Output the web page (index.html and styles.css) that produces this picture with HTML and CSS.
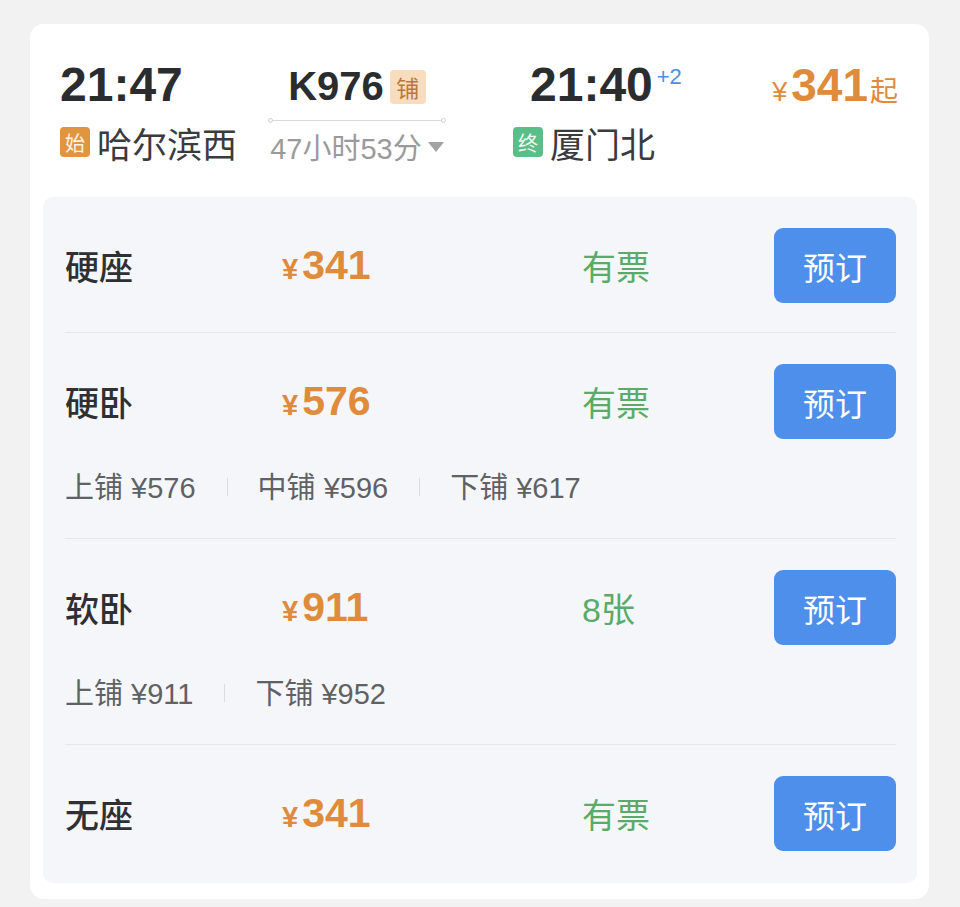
FILE: index.html
```html
<!DOCTYPE html>
<html lang="zh-CN">

<head>
    <meta charset="UTF-8">
    <meta name="viewport" content="width=device-width, initial-scale=1.0">
    <title>K976 车次详情</title>
    <link rel="stylesheet" href="styles.css">
</head>

<body>

    <div class="card">
        <div class="trip">
            <div class="end">
                <div class="time">21:47</div>
                <div class="station"><span class="tag tag-start">始</span>哈尔滨西</div>
            </div>

            <div class="train">
                <div class="train-no">K976<span class="tag tag-berth">铺</span></div>
                <svg class="track" width="178" height="7" viewBox="0 0 178 7">
                    <line x1="4" y1="3.5" x2="174" y2="3.5" stroke="#d9d9d9" stroke-width="1.2" />
                    <circle cx="2.5" cy="3.5" r="2" fill="#fff" stroke="#d0d0d0" stroke-width="1" />
                    <circle cx="175.5" cy="3.5" r="2" fill="#fff" stroke="#d0d0d0" stroke-width="1" />
                </svg>
                <div class="duration">47小时53分
                    <svg class="caret" width="16" height="11" viewBox="0 0 16 11">
                        <polygon points="0,0 16,0 8,10" fill="#a3a3a3" />
                    </svg>
                </div>
            </div>

            <div class="end end-to">
                <div class="time">21:40<span class="plus">+2</span></div>
                <div class="station"><span class="tag tag-end">终</span>厦门北</div>
            </div>

            <div class="lowest">
                <span class="lowest-yen">¥</span><span class="lowest-amount">341</span><span class="lowest-qi">起</span>
            </div>
        </div>

        <div class="seats">
            <div class="seat">
                <div class="seat-main">
                    <div class="seat-name">硬座</div>
                    <div class="seat-price"><span class="yen">¥</span>341</div>
                    <div class="seat-left">有票</div>
                    <button class="book">预订</button>
                </div>
            </div>

            <div class="seat">
                <div class="seat-main">
                    <div class="seat-name">硬卧</div>
                    <div class="seat-price"><span class="yen">¥</span>576</div>
                    <div class="seat-left">有票</div>
                    <button class="book">预订</button>
                </div>
                <div class="berths">
                    <span>上铺 ¥576</span>
                    <i class="sep"></i>
                    <span>中铺 ¥596</span>
                    <i class="sep"></i>
                    <span>下铺 ¥617</span>
                </div>
            </div>

            <div class="seat">
                <div class="seat-main">
                    <div class="seat-name">软卧</div>
                    <div class="seat-price"><span class="yen">¥</span>911</div>
                    <div class="seat-left">8张</div>
                    <button class="book">预订</button>
                </div>
                <div class="berths">
                    <span>上铺 ¥911</span>
                    <i class="sep"></i>
                    <span>下铺 ¥952</span>
                </div>
            </div>

            <div class="seat">
                <div class="seat-main">
                    <div class="seat-name">无座</div>
                    <div class="seat-price"><span class="yen">¥</span>341</div>
                    <div class="seat-left">有票</div>
                    <button class="book">预订</button>
                </div>
            </div>
        </div>
    </div>

</body>

</html>
```

FILE: styles.css
```css
body {
    margin: 0;
    padding: 24px 31px 9px 30px;
    background-color: #f2f2f3;
    font-family: "Liberation Sans", "Noto Sans CJK SC", sans-serif;
    color: #2f3033;
}

.card {
    background-color: #fff;
    border-radius: 14px;
    padding: 0 12px 16px 13px;
}

/* header: times, stations, train */

.trip {
    display: flex;
    align-items: flex-start;
    padding: 37px 19px 33px 17px;
}

.end {
    width: 208px;
}

.end-to {
    width: auto;
    margin-left: 67px;
}

.time {
    font-size: 48px;
    line-height: 48px;
    font-weight: bold;
    color: #2b2c2f;
    white-space: nowrap;
}

.end-to .time {
    padding-left: 17px;
}

.plus {
    display: inline-block;
    vertical-align: top;
    margin-top: 3px;
    font-size: 22px;
    line-height: 26px;
    font-weight: normal;
    color: #4a8fe0;
    margin-left: 4px;
}

.station {
    display: flex;
    align-items: center;
    margin-top: 15px;
    height: 36px;
    font-size: 35px;
    color: #3a3b3e;
    white-space: nowrap;
}

.tag {
    display: inline-flex;
    align-items: center;
    justify-content: center;
    border-radius: 4px;
    font-family: "Noto Sans CJK SC", sans-serif;
}

.tag-start,
.tag-end {
    width: 30px;
    height: 30px;
    font-size: 20px;
    color: #fff3e6;
    margin-right: 7px;
}

.tag-start {
    background-color: #e2953f;
}

.tag-end {
    background-color: #5bbd87;
    color: #eefaf2;
}

.train {
    width: 178px;
    display: flex;
    flex-direction: column;
    align-items: center;
}

.train-no {
    display: flex;
    align-items: center;
    height: 48px;
    padding-top: 3px;
    box-sizing: border-box;
    font-size: 40px;
    font-weight: bold;
    color: #2b2c2f;
}

.tag-berth {
    width: 36px;
    height: 34px;
    margin-left: 6px;
    font-size: 23px;
    font-weight: normal;
    background-color: #f7dcbd;
    color: #b9783a;
}

.track {
    display: block;
    margin-top: 8px;
}

.duration {
    display: flex;
    align-items: center;
    gap: 6px;
    margin-top: 4px;
    height: 36px;
    font-size: 29px;
    color: #9a9a9c;
    white-space: nowrap;
}

.caret {
    margin-top: 2px;
}

.lowest {
    margin-left: auto;
    display: flex;
    align-items: baseline;
    line-height: 48px;
    color: #e08a3b;
}

.lowest-yen {
    font-size: 27px;
    margin-right: 4px;
}

.lowest-amount {
    font-size: 46px;
    font-weight: bold;
}

.lowest-qi {
    font-size: 28px;
    margin-left: 2px;
}

/* seat list */

.seats {
    background-color: #f5f6fa;
    border-radius: 10px;
}

.seat {
    margin: 0 21px 0 22px;
    padding: 31px 0 29px;
    border-bottom: 1px solid #e5e6ea;
}

.seat:last-child {
    border-bottom: none;
    padding-bottom: 32px;
}

.seat-main {
    display: grid;
    grid-template-columns: 217px 300px 1fr 122px;
    align-items: center;
}

.seat-name {
    font-size: 34px;
    font-weight: 500;
    color: #2f3033;
}

.seat-price {
    font-size: 41px;
    font-weight: bold;
    color: #e08a3b;
}

.yen {
    font-size: 29px;
    margin-right: 4px;
}

.seat-left {
    font-size: 34px;
    color: #5aab69;
}

.book {
    width: 122px;
    height: 75px;
    border: none;
    border-radius: 9px;
    background-color: #4e8fec;
    color: #fff;
    font-family: "Noto Sans CJK SC", sans-serif;
    font-size: 32px;
    cursor: pointer;
}

.berths {
    display: flex;
    align-items: center;
    height: 32px;
    margin-top: 30px;
    margin-bottom: 8px;
    font-size: 29px;
    color: #606164;
}

.sep {
    width: 1px;
    height: 18px;
    margin: 4px 30px 0 31px;
    background-color: #dcdcde;
}
```
